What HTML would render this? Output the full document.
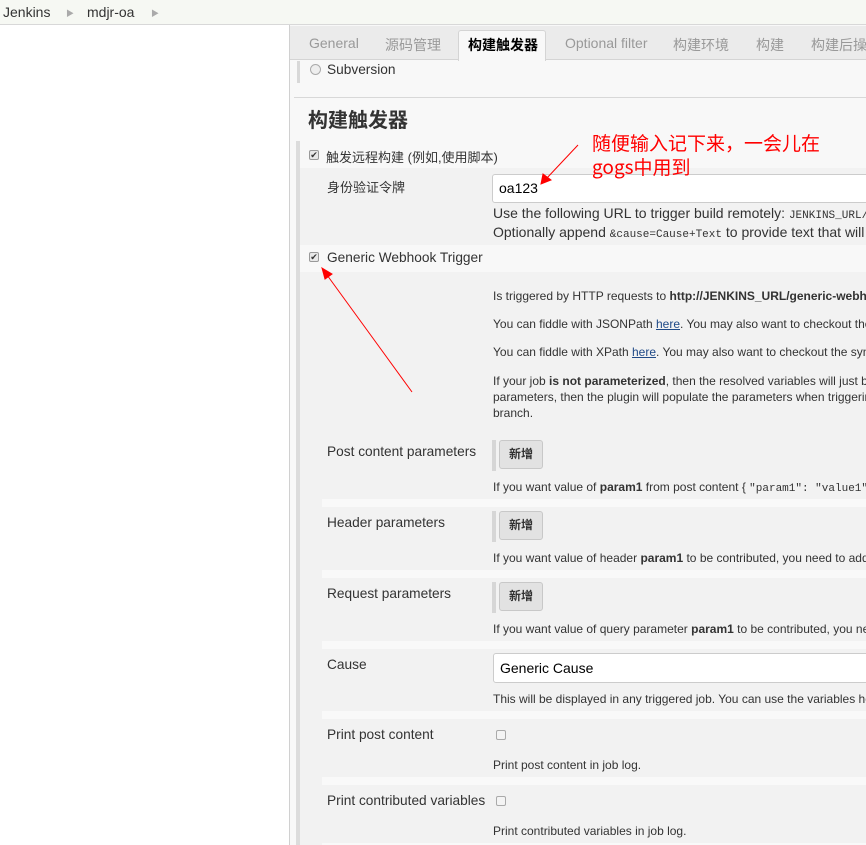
<!DOCTYPE html>
<html><head><meta charset="utf-8">
<style>
*{margin:0;padding:0;box-sizing:border-box}
html,body{width:866px;height:845px;overflow:hidden}
body{background:#fff;font-family:"Liberation Sans","Noto Sans CJK SC",sans-serif;color:#333}
#w{position:relative;width:866px;height:845px;overflow:hidden}
.a{position:absolute;white-space:nowrap}
.hdr{left:0;top:0;width:866px;height:25px;background:#f6f8f3;border-bottom:1px solid #d8d8d8}
.bc{font-size:14px;top:4px;color:#333}
.arr{font-size:8px;color:#aaa;top:8px}
.right{left:289px;top:25px;width:577px;height:820px;background:#f8f8f8;border-left:1px solid #d0d0d0}
.tabs{left:290px;top:26px;width:576px;height:34px;background:#ebebeb;border-bottom:1px solid #d4d4d4}
.tab{font-size:14px;color:#999;top:35px}
.act{left:458px;top:30px;width:88px;height:31px;background:#f8f8f8;border:1px solid #d4d4d4;border-bottom:none;border-radius:3px 3px 0 0}
.cb{width:10px;height:10px;border:1px solid #999;border-radius:2px;background:#e8e8e8;font-size:9px;line-height:8px;text-align:center;color:#333}
.t14{font-size:13.7px;color:#333}
.t12{font-size:12px;color:#333}
.btn{width:44px;height:29px;background:#e2e2e2;border:1px solid #c8c8c8;border-radius:3px;font-size:12px;font-weight:bold;text-align:center;line-height:27px;color:#333}
.bar{width:4px;height:31px;background:#d6d6d6}
.inp{background:#fff;border:1px solid #ccc;border-radius:3px;font-size:14px;padding-left:6px;color:#000}
.mono{font-family:"Liberation Mono",monospace;font-size:11px}
</style></head><body><div id="w">
<div class="a hdr"></div>
<div class="a bc" style="left:3px">Jenkins</div>
<div class="a arr" style="left:66px">▶</div>
<div class="a bc" style="left:87px">mdjr-oa</div>
<div class="a arr" style="left:151px">▶</div>

<div class="a right"></div>
<div class="a tabs"></div>
<div class="a act"></div>
<div class="a tab" style="left:309px">General</div>
<div class="a tab" style="left:385px">源码管理</div>
<div class="a tab" style="left:468px;color:#000;font-weight:bold">构建触发器</div>
<div class="a tab" style="left:565px">Optional filter</div>
<div class="a tab" style="left:673px">构建环境</div>
<div class="a tab" style="left:756px">构建</div>
<div class="a tab" style="left:811px">构建后操作</div>

<div class="a" style="left:297px;top:61px;width:3px;height:22px;background:#d8d8d8"></div>
<div class="a" style="left:310px;top:64px;width:11px;height:11px;border:1px solid #aaa;border-radius:50%;background:#eee"></div>
<div class="a t14" style="left:327px;top:62px">Subversion</div>
<div class="a" style="left:294px;top:97px;width:572px;height:1px;background:#d8d8d8"></div>
<div class="a" style="left:308px;top:104px;font-size:20px;font-weight:bold;color:#333">构建触发器</div>

<div class="a" style="left:296px;top:141px;width:4px;height:704px;background:#dcdcdc"></div>
<div class="a" style="left:300px;top:168px;width:566px;height:77px;background:#f2f2f2"></div>
<div class="a cb" style="left:309px;top:150px">✔</div>
<div class="a" style="left:326px;top:147px;font-size:13px">触发远程构建 (例如,使用脚本)</div>
<div class="a" style="left:327px;top:177px;font-size:13px">身份验证令牌</div>
<div class="a inp" style="left:492px;top:174px;width:380px;height:29px;line-height:27px">oa123</div>
<div class="a" style="left:493px;top:205px;font-size:14px;color:#333">Use the following URL to trigger build remotely: <span class="mono">JENKINS_URL/job/</span></div>
<div class="a" style="left:493px;top:224px;font-size:14px;color:#333">Optionally append <span class="mono">&amp;cause=Cause+Text</span> to provide text that will be</div>

<div class="a cb" style="left:309px;top:252px">✔</div>
<div class="a t14" style="left:327px;top:250px">Generic Webhook Trigger</div>
<div class="a" style="left:300px;top:272px;width:566px;height:573px;background:#f2f2f2"></div>

<div class="a t12" style="left:493px;top:289px">Is triggered by HTTP requests to <b>http://JENKINS_URL/generic-webhook-trigger</b></div>
<div class="a t12" style="left:493px;top:317px">You can fiddle with JSONPath <u style="color:#204a87">here</u>. You may also want to checkout the syntax</div>
<div class="a t12" style="left:493px;top:345px">You can fiddle with XPath <u style="color:#204a87">here</u>. You may also want to checkout the syntax</div>
<div class="a t12" style="left:493px;top:373px;line-height:16px">If your job <b>is not parameterized</b>, then the resolved variables will just be<br>parameters, then the plugin will populate the parameters when triggering<br>branch.</div>

<div class="a" style="left:322px;top:499px;width:544px;height:8px;background:#f9f9f9"></div>
<div class="a" style="left:322px;top:570px;width:544px;height:8px;background:#f9f9f9"></div>
<div class="a" style="left:322px;top:641px;width:544px;height:8px;background:#f9f9f9"></div>
<div class="a" style="left:322px;top:711px;width:544px;height:8px;background:#f9f9f9"></div>
<div class="a" style="left:322px;top:777px;width:544px;height:8px;background:#f9f9f9"></div>
<div class="a" style="left:322px;top:843px;width:544px;height:2px;background:#f9f9f9"></div>

<div class="a t14" style="left:327px;top:444px">Post content parameters</div>
<div class="a bar" style="left:492px;top:440px"></div>
<div class="a btn" style="left:499px;top:440px">新增</div>
<div class="a t12" style="left:493px;top:480px">If you want value of <b>param1</b> from post content { <span class="mono">"param1": "value1"</span></div>

<div class="a t14" style="left:327px;top:515px">Header parameters</div>
<div class="a bar" style="left:492px;top:511px"></div>
<div class="a btn" style="left:499px;top:511px">新增</div>
<div class="a t12" style="left:493px;top:551px">If you want value of header <b>param1</b> to be contributed, you need to add</div>

<div class="a t14" style="left:327px;top:586px">Request parameters</div>
<div class="a bar" style="left:492px;top:582px"></div>
<div class="a btn" style="left:499px;top:582px">新增</div>
<div class="a t12" style="left:493px;top:622px">If you want value of query parameter <b>param1</b> to be contributed, you need</div>

<div class="a t14" style="left:327px;top:657px">Cause</div>
<div class="a inp" style="left:493px;top:653px;width:380px;height:30px;line-height:28px">Generic Cause</div>
<div class="a t12" style="left:493px;top:692px">This will be displayed in any triggered job. You can use the variables here</div>

<div class="a t14" style="left:327px;top:727px">Print post content</div>
<div class="a" style="left:496px;top:730px;width:10px;height:10px;border:1px solid #aaa;border-radius:2px;background:#f4f4f4"></div>
<div class="a t12" style="left:493px;top:758px">Print post content in job log.</div>

<div class="a t14" style="left:327px;top:793px">Print contributed variables</div>
<div class="a" style="left:496px;top:796px;width:10px;height:10px;border:1px solid #aaa;border-radius:2px;background:#f4f4f4"></div>
<div class="a t12" style="left:493px;top:824px">Print contributed variables in job log.</div>

<div class="a" style="left:592px;top:131px;font-size:19px;line-height:24px;color:#f00;font-family:'Noto Sans CJK SC','Liberation Sans',sans-serif">随便输入记下来，一会儿在<br>gogs中用到</div>
<svg class="a" style="left:0;top:0" width="866" height="845">
<g stroke="#f00" stroke-width="1" fill="#f00">
<line x1="578" y1="145" x2="546" y2="179"/>
<polygon points="541,184 543,174 551,180"/>
<line x1="412" y1="392" x2="327" y2="275"/>
<polygon points="322,268 332,274 325,279"/>
</g></svg>
</div></body></html>
